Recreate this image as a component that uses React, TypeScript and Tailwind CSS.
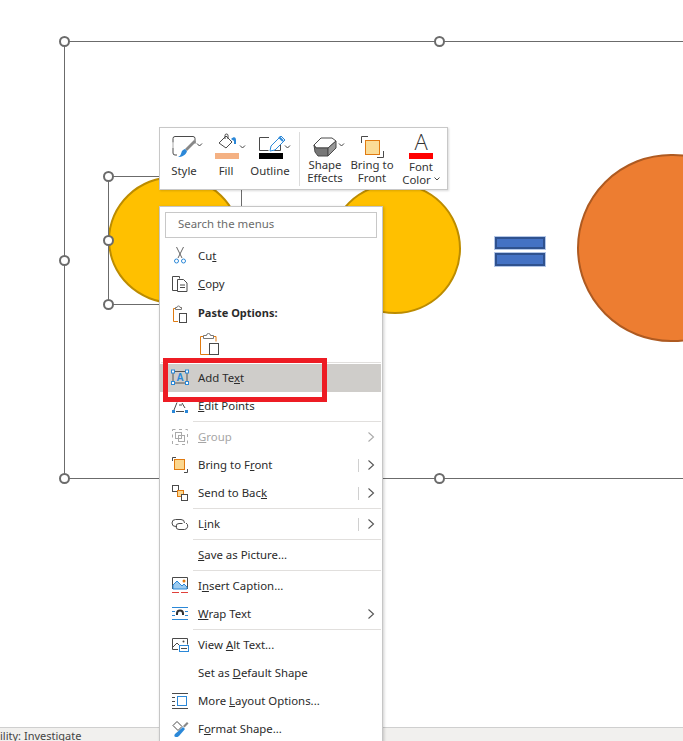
import React from "react";

const D = "#4a4a4a";
const B = "#2b88d8";
const O = "#e07a10";

function Ic({ children, w = 20, h = 20 }: { children?: React.ReactNode; w?: number; h?: number }) {
  return (
    <svg width={w} height={h} viewBox={`0 0 ${w} ${h}`} fill="none" className="block shrink-0">
      {children}
    </svg>
  );
}

const Cut = () => (
  <Ic>
    <path d="M6.5 1 12 12M13.5 1 8 12" stroke="#666" />
    <circle cx="6.5" cy="15" r="2" stroke={B} />
    <circle cx="13.5" cy="15" r="2" stroke={B} />
  </Ic>
);
const Copy = () => (
  <Ic>
    <path d="M7.5 16.5h-5v-14h7v2" stroke={D} />
    <path d="M7.5 5.5h6l3.5 3.5v8.5h-9.5z" fill="#fff" stroke={D} />
    <path d="M10 11h5M10 13.5h5" stroke={D} />
  </Ic>
);
const PasteSmall = () => (
  <Ic>
    <path d="M10 4.5h1.5v-1M8 17.5H3.5V4.5h2" stroke={O} />
    <path d="M5.5 5.5v-2h1.5a1.5 1.5 0 0 1 3 0h1.5v2z" fill="#fff" stroke="#777" />
    <rect x="9.5" y="9.5" width="7" height="9" fill="#fff" stroke={D} />
  </Ic>
);
const PasteBig = () => (
  <Ic w={24} h={26}>
    <path d="M11 23.5H2.5V5.5h3M15 5.5h3v5" stroke={O} />
    <path d="M5.5 7.5v-3h3a2 2 0 0 1 4 0h3v3z" fill="#fff" stroke="#777" />
    <rect x="11.5" y="12.5" width="9" height="11" fill="#fff" stroke={D} />
  </Ic>
);
const AddTextIcon = () => (
  <Ic>
    <path d="M3 3.5h14M3 15h14M3 4v11M17 4v11" stroke="#555" />
    {[[1.5, 2], [15.5, 2], [1.5, 13.5], [15.5, 13.5]].map(([x, y]) => (
      <rect key={x + "-" + y} x={x} y={y} width="3" height="3" fill="#fff" stroke={B} />
    ))}
    <text x="10" y="13" textAnchor="middle" fontSize="10" fontWeight="700" fill={B} fontFamily="Liberation Sans, sans-serif">A</text>
  </Ic>
);
const EditPoints = () => (
  <Ic>
    <path d="M4 14 7 6.5M12 7l3 5" stroke={D} />
    <path d="M8 5h2M9 9h3" stroke={D} />
    <rect x="2" y="14" width="3" height="3" fill={B} />
    <rect x="15" y="14" width="3" height="3" fill={B} />
    <path d="M6 15.5h8" stroke={D} />
  </Ic>
);
const GroupIcon = () => (
  <Ic>
    <path d="M2.5 2.5h15v15h-15z" stroke="#aaa" strokeDasharray="3 3.5" />
    <rect x="5.5" y="5.5" width="6" height="6" stroke="#aaa" />
    <rect x="8.5" y="8.5" width="6" height="6" stroke="#aaa" />
  </Ic>
);
const FrontIcon = () => (
  <Ic>
    <path d="M2.5 6V2.5H6M14 17.5h3.5V14" stroke={D} />
    <rect x="4.5" y="4.5" width="10" height="10" fill="#fbd78f" stroke={O} />
  </Ic>
);
const BackIcon = () => (
  <Ic>
    <rect x="2.5" y="2.5" width="6" height="6" fill="#fff" stroke={D} />
    <rect x="7.5" y="7.5" width="6" height="6" fill="#fbd78f" stroke={O} />
    <rect x="11.5" y="11.5" width="6" height="6" fill="#fff" stroke={D} />
  </Ic>
);
const LinkIcon = () => (
  <Ic>
    <path d="M7 12.5H5.5a3.5 3.5 0 0 1 0-7H11a3.5 3.5 0 0 1 3.5 3.5" stroke={D} />
    <path d="M12.5 9.5H9a3 3 0 0 0 0 6h5.5a3.5 3.5 0 0 0 1.5-6.5" stroke={D} />
  </Ic>
);
const Caption = () => (
  <Ic>
    <path d="M2.5 13V1.5h15V13" stroke={D} />
    <path d="M3 13V9l4-4 5 5 2-2 3 3v2z" fill="#9ccbf0" stroke={B} />
    <circle cx="14" cy="5" r="1.5" fill={O} />
    <path d="M2 16.5h7M11 16.5h7" stroke="#e0403a" />
  </Ic>
);
const Wrap = () => (
  <Ic>
    <path d="M2 3.5h16M2 15.5h16M2 7.5h3M15 7.5h3M2 11.5h3M15 11.5h3" stroke={B} />
    <path d="M7 11V9.5a3 3 0 0 1 6 0V11" stroke="#333" strokeWidth="2" />
  </Ic>
);
const AltText = () => (
  <Ic>
    <path d="M8 14.5H2.5v-11h15v6" stroke={D} />
    <path d="M3 12l4-4 3 3" stroke={D} />
    <circle cx="13.5" cy="6.5" r="1" fill={D} />
    <rect x="9.5" y="10.5" width="9" height="6" fill="#fff" stroke={B} />
    <path d="M11 13.5h6" stroke={D} />
  </Ic>
);
const MoreLayout = () => (
  <Ic>
    <path d="M2 2.5h16M2 17.5h16M2 6.5h3M2 10.5h3M2 14.5h3" stroke={D} />
    <rect x="7.5" y="5.5" width="9" height="9" stroke={B} />
  </Ic>
);
const FormatShape = () => (
  <Ic>
    <path d="M3 6.5 7 2.5l5 5-4 4z" fill="#fff" stroke={D} />
    <path d="M6 18c-2 0-2-2-1-3l8-7 2 2-6 7c-1 1-2 1-3 1z" fill={B} />
    <path d="m13 7 4-4 1.5 1.5-4 4z" fill="#888" />
  </Ic>
);

const Chev = ({ c = "#666" }: { c?: string }) => (
  <svg width="8" height="12" viewBox="0 0 8 12" fill="none" className="block shrink-0">
    <path d="M1.5 1.5 6.5 6l-5 4.5" stroke={c} strokeWidth="1.1" />
  </svg>
);

function Row({
  icon, label, sub, bar, bold, disabled, active,
}: {
  icon?: React.ReactNode; label: React.ReactNode; sub?: boolean; bar?: boolean; bold?: boolean; disabled?: boolean; active?: boolean;
}) {
  return (
    <div className={`flex h-[28px] items-center pl-[10px] pr-[7px] ${active ? "mr-[1px] bg-[#cfcdca]" : ""} ${disabled ? "text-[#a6a6a6]" : "text-[#2b2b2b]"} ${bold ? "pt-[1px] text-[11px] font-bold" : ""}`}>
      <span className="flex w-[20px] shrink-0 items-center justify-center">{icon}</span>
      <span className="ml-[8px] flex-1 whitespace-nowrap">{label}</span>
      {bar ? <span className="mr-[8px] h-[13px] w-px bg-[#d0d0d0]" /> : null}
      {sub ? <Chev c={disabled ? "#aaa" : "#555"} /> : null}
    </div>
  );
}

const Sep = () => (
  <div className="flex h-[3px] items-center pl-[33px] pr-[1px]">
    <div className="h-px w-full bg-[#e1dfdd]" />
  </div>
);

function Tool({ w, icon, lines, pt = 0 }: { w: string; icon: React.ReactNode; lines: React.ReactNode[]; pt?: number }) {
  return (
    <div className={`flex shrink-0 flex-col items-center ${w}`}>
      {icon}
      <div className="-mt-[3px] flex h-[26px] flex-col items-center justify-center leading-[13px] text-[#333]" style={{ paddingTop: pt }}>
        {lines.map((l, i) => (
          <div key={i} className="whitespace-nowrap">{l}</div>
        ))}
      </div>
    </div>
  );
}

const Handle = ({ x, y }: { x: number; y: number }) => (
  <div className="absolute h-[11px] w-[11px] rounded-full border-2 border-[#6b6b6b] bg-white" style={{ left: x - 5, top: y - 5 }} />
);
const HLine = ({ x, y, w }: { x: number; y: number; w: number }) => (
  <div className="absolute h-px bg-[#6b6b6b]" style={{ left: x, top: y, width: w }} />
);
const VLine = ({ x, y, h }: { x: number; y: number; h: number }) => (
  <div className="absolute w-px bg-[#6b6b6b]" style={{ left: x, top: y, height: h }} />
);

export default function App() {
  return (
    <div className="relative h-[741px] w-[683px] overflow-hidden bg-white font-['Noto_Sans',sans-serif] text-[11.4px]">
      {/* slide canvas */}
      <div className="absolute left-[108px] top-[176px] h-[128px] w-[133px] rounded-[50%] border-2 border-[#bc8c00] bg-[#ffc000]" />
      <div className="absolute left-[329px] top-[183px] h-[131px] w-[132px] rounded-[50%] border-2 border-[#bc8c00] bg-[#ffc000]" />
      <div className="absolute left-[577px] top-[154px] h-[188px] w-[190px] rounded-full border-2 border-[#ae5a21] bg-[#ed7d31]" />
      <div className="absolute left-[495px] top-[237px] h-[12px] w-[50px] border-2 border-[#2f528f] bg-[#4472c4] ring-1 ring-[#b4c7e7]" />
      <div className="absolute left-[495px] top-[253px] h-[13px] w-[50px] border-2 border-[#2f528f] bg-[#4472c4] ring-1 ring-[#b4c7e7]" />

      <HLine x={64} y={41} w={619} />
      <HLine x={64} y={478} w={619} />
      <VLine x={64} y={41} h={437} />
      <HLine x={108} y={176} w={133} />
      <HLine x={108} y={304} w={133} />
      <VLine x={108} y={176} h={128} />
      <VLine x={241} y={176} h={128} />
      <Handle x={64} y={41} />
      <Handle x={439} y={41} />
      <Handle x={64} y={260} />
      <Handle x={64} y={478} />
      <Handle x={439} y={478} />
      <Handle x={108} y={176} />
      <Handle x={108} y={240} />
      <Handle x={108} y={304} />

      {/* status bar */}
      <div className="absolute inset-x-0 top-[727px] h-[14px] overflow-hidden border-t border-[#cfcfcf] bg-[#f1f0ee] text-[11px] leading-[16px] text-[#444]">
        ility: Investigate
      </div>

      {/* mini toolbar */}
      <div className="absolute left-[159px] top-[127px] flex h-[63px] w-[289px] border border-[#c8c8c8] bg-white pl-[3px] pt-[1px] shadow-[1px_1px_2px_rgba(0,0,0,0.15)]">
        <Tool
          w="w-[42px]"
          lines={["Style"]}
          icon={
            <Ic w={42} h={31}>
              <path d="M12 7.5h18a2 2 0 0 1 2 2v5M12 7.5a2 2 0 0 0-2 2v4M10 19v5a2 2 0 0 0 2 2h2" stroke={D} />
              <path d="M10 13.5v5.5" stroke="#aaa" />
              <path d="m33 13-9 9-2-2 9-9z" fill="#888" />
              <path d="M22 20l2 2c-1 4-5 6-9 6 3-1 3-4 4-6 1-1 2-2 3-2z" fill={B} />
              <path d="M34 14.5l2.5 2.5 2.5-2.5" stroke="#444" />
            </Ic>
          }
        />
        <Tool
          w="w-[42px]"
          lines={["Fill"]}
          icon={
            <Ic w={42} h={31}>
              <path d="M14 14l7-7 6 6-6 6z" fill="#fff" stroke={D} />
              <path d="M20 10V6.5a1.5 1.5 0 0 1 3 0V10" stroke={D} />
              <path d="M26 10c3-3 5-2 5 1v4h-2v-3c-1-1-2-1-3-2z" fill={B} />
              <rect x="10" y="24" width="24" height="6" fill="#f4b183" />
              <path d="M35 16.5l2.5 2.5 2.5-2.5" stroke="#444" />
            </Ic>
          }
        />
        <Tool
          w="w-[46px]"
          lines={["Outline"]}
          icon={
            <Ic w={46} h={31}>
              <path d="M22 8.5H12.5v13h9M27 21.5h6.5v-6" stroke={D} />
              <path d="M23 22l1-5 10-10 4 4-10 10z" fill="#fff" stroke={B} />
              <path d="M32 8l4 4" stroke={B} strokeWidth="2" />
              <rect x="12" y="24" width="24" height="6" fill="#000" />
              <path d="M38 16.5l2.5 2.5 2.5-2.5" stroke="#444" />
            </Ic>
          }
        />
        <div className="ml-[6px] mr-[3px] mt-[3px] h-[54px] w-px bg-[#dcdcdc]" />
        <Tool
          w="w-[44px]"
          pt={2}
          lines={["Shape", "Effects"]}
          icon={
            <Ic w={44} h={31}>
              <path d="M11 16l7-7h11l4 3-8 7H13z" fill="#fff" stroke={D} />
              <path d="M11 16l1 7 3 4h10v-8H13z" fill="#777" stroke={D} />
              <path d="M25 19l8-7v7l-8 8z" fill="#999" stroke={D} />
              <path d="M36 14.5l2.5 2.5 2.5-2.5" stroke="#444" />
            </Ic>
          }
        />
        <Tool
          w="w-[50px]"
          pt={2}
          lines={["Bring to", "Front"]}
          icon={
            <Ic w={48} h={31}>
              <path d="M13.5 14V7.5h6.5M29 28.5h6.5V22" stroke={D} />
              <rect x="17.5" y="11.5" width="14" height="14" fill="#fbdc96" stroke={O} />
            </Ic>
          }
        />
        <Tool
          w="w-[48px]"
          pt={5}
          lines={[
            "Font",
            <span key="c" className="inline-flex items-center gap-[3px]">
              Color
              <svg width="6" height="4" viewBox="0 0 6 4" fill="none" className="block">
                <path d="M.5.5l2.5 2.5 2.5-2.5" stroke="#444" />
              </svg>
            </span>,
          ]}
          icon={
            <div className="flex h-[31px] flex-col items-center">
              <span className="h-[24px] font-['Open_Sans',sans-serif] text-[22px] font-light leading-[24px] text-[#333]">A</span>
              <span className="h-[6px] w-[24px] bg-[#f00]" />
            </div>
          }
        />
      </div>

      {/* context menu */}
      <div className="absolute left-[159px] top-[206px] h-[560px] w-[224px] border border-[#c6c6c6] bg-white shadow-[1px_1px_3px_rgba(0,0,0,0.2)]">
        <div className="mx-[5px] mt-[5px] flex h-[26px] items-center border border-[#c8c8c8] pb-[2px] pl-[12px] text-[#6b6b6b]">
          Search the menus
        </div>
        <div className="mt-[4px]">
          <Row icon={<Cut />} label={<>Cu<u>t</u></>} />
          <Row icon={<Copy />} label={<><u>C</u>opy</>} />
          <div className="mt-[1px]">
            <Row icon={<PasteSmall />} bold label="Paste Options:" />
          </div>
          <div className="flex h-[34px] items-center pl-[38px]">
            <PasteBig />
          </div>
          <div className="flex h-[3px] items-center px-[1px]">
            <div className="h-px w-full bg-[#e1dfdd]" />
          </div>
          <Row active icon={<AddTextIcon />} label={<>Add Te<u>x</u>t</>} />
          <Row icon={<EditPoints />} label={<><u>E</u>dit Points</>} />
          <Sep />
          <Row disabled sub icon={<GroupIcon />} label={<><u>G</u>roup</>} />
          <Row sub bar icon={<FrontIcon />} label={<>Bring to F<u>r</u>ont</>} />
          <Row sub bar icon={<BackIcon />} label={<>Send to Bac<u>k</u></>} />
          <Sep />
          <Row sub bar icon={<LinkIcon />} label={<>L<u>i</u>nk</>} />
          <Sep />
          <Row label={<><u>S</u>ave as Picture...</>} />
          <Sep />
          <Row icon={<Caption />} label={<>I<u>n</u>sert Caption...</>} />
          <Row sub icon={<Wrap />} label={<><u>W</u>rap Text</>} />
          <Sep />
          <Row icon={<AltText />} label={<>View <u>A</u>lt Text...</>} />
          <Row label={<>Set as <u>D</u>efault Shape</>} />
          <Row icon={<MoreLayout />} label={<>More <u>L</u>ayout Options...</>} />
          <Row icon={<FormatShape />} label={<>F<u>o</u>rmat Shape...</>} />
        </div>
      </div>

      {/* red annotation */}
      <div className="absolute left-[163px] top-[358px] h-[44px] w-[164px] border-[5px] border-[#ed1c24]" />
    </div>
  );
}
